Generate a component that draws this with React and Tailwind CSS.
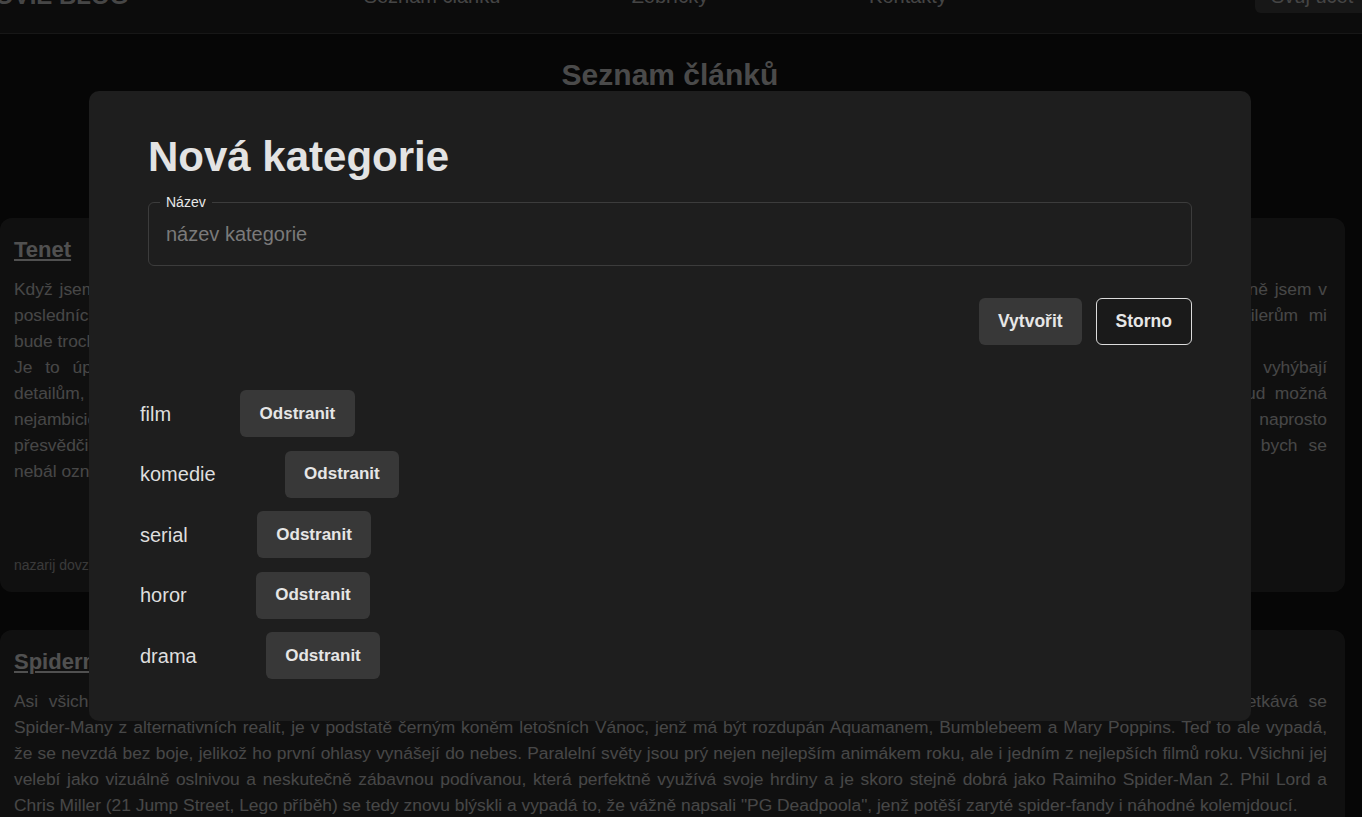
const tenet = [
  [
    'Když jsem poprvé viděl trailer na nový film Christophera Nolana, věděl jsem, že tohle bude něco výjimečného, a na premiéru jsem se těšil celé léto. Upřímně jsem v',
    'posledních letech v kině nezažil tak silný zážitek jako u Teneta, a proto se vám ho pokusím co nejlépe přiblížit, i když vzhledem k možným spoilerům mi',
    'bude trochu těžké popsat samotný děj.',
  ],
  [
    'Je to úplně jiný typ filmu, než na jaký jsme zvyklí. Nolan si opět pohrává s časem, vytváří svět plný paradoxů a postavy se řečem spíše vyhýbají',
    'detailům, takže film je neuvěřitelně rychlý a divák nemá ani chvilku na oddech. Tenet je podle mě jedním z nejlepších snímků posledních let, a pokud možná',
    'nejambicióznějším filmem, jaký kdy Christopher Nolan natočil. Vše do sebe perfektně zapadá, herci jsou skvělí a hudba Ludwiga Göranssona mě naprosto',
    'přesvědčila, že jde o výjimečný zážitek. Vizuální efekty jsou dechberoucí a akční scény patří k tomu nejlepšímu, co jsem viděl. Je to film, který bych se',
    'nebál označit za moderní klasiku.',
  ],
];

const spider = [
  [
    'Asi všichni čekali, že nový animovaný film o Spider-Manovi, ve kterém se mladý Miles Morales z Brooklynu po smrti Petera Parkera nečekaně setkává se',
    'Spider-Many z alternativních realit, je v podstatě černým koněm letošních Vánoc, jenž má být rozdupán Aquamanem, Bumblebeem a Mary Poppins. Teď to ale vypadá,',
    'že se nevzdá bez boje, jelikož ho první ohlasy vynášejí do nebes. Paralelní světy jsou prý nejen nejlepším animákem roku, ale i jedním z nejlepších filmů roku. Všichni jej',
    'velebí jako vizuálně oslnivou a neskutečně zábavnou podívanou, která perfektně využívá svoje hrdiny a je skoro stejně dobrá jako Raimiho Spider-Man 2. Phil Lord a',
    'Chris Miller (21 Jump Street, Lego příběh) se tedy znovu blýskli a vypadá to, že vážně napsali "PG Deadpoola", jenž potěší zaryté spider-fandy i náhodné kolemjdoucí.',
  ],
];

const categories = ['film', 'komedie', 'serial', 'horor', 'drama'];

// Article card in the list behind the modal
const Article = ({ title, paragraphs, footer }) => (
  <article className="rounded-xl bg-[#2a2a2a] pl-[14px] pr-[18px] pt-[19px] pb-[17px]">
    <h2 className="text-[22px] leading-[26px] font-bold underline text-[#c8c8c8]">{title}</h2>
    <div className="mt-[13px] text-[17.4px] leading-[26px] text-[#b2b2b2]">
      {paragraphs.map((lines, i) => (
        <p key={i}>
          {lines.map((line, j) => (
            <span
              key={j}
              className={
                j < lines.length - 1
                  ? 'block whitespace-nowrap text-justify [text-align-last:justify]'
                  : 'block whitespace-nowrap'
              }
            >
              {line}
            </span>
          ))}
        </p>
      ))}
    </div>
    {footer && <p className="mt-[71px] text-sm leading-5 text-[#919191]">{footer}</p>}
  </article>
);

export default function App() {
  return (
    <div className="min-h-screen overflow-hidden bg-[#0f0f0f] font-['Liberation_Sans',Arial,sans-serif]">
      {/* Header (scrolled slightly) */}
      <header className="h-[34px] overflow-hidden border-b border-[#3a3a3a] bg-[#1e1e1e]">
        <div className="-mt-[16px] flex h-[24px] items-center">
          <div className="-ml-[25px] w-[338px] shrink-0 text-2xl leading-6 font-bold text-[#b0b0b0]">MOVIE BLOG</div>
          <nav className="flex text-[20px] leading-6 text-[#adadad]">
            <a className="w-[238px] text-center">Seznam článků</a>
            <a className="w-[238px] text-center">Žebříčky</a>
            <a className="w-[238px] text-center">Kontakty</a>
          </nav>
          <button className="ml-[228px] flex h-[34px] w-[140px] shrink-0 items-end rounded-md bg-[#3a3a3a] px-[16px] pb-[5px] text-[20px] leading-6 text-[#adadad]">
            Svůj účet
          </button>
        </div>
      </header>

      <main className="w-[1345px]">
        <h1 className="mt-[23px] pr-[5px] text-center text-[30px] leading-9 font-bold text-[#b9b9b9]">Seznam článků</h1>
        <div className="mt-[125px] flex flex-col gap-[38px]">
          <Article title="Tenet" paragraphs={tenet} footer="nazarij dovzhenko · 12. 9. 2020" />
          <Article title="Spiderman: Paralelní světy" paragraphs={spider} />
        </div>
      </main>

      {/* Modal */}
      <div className="fixed inset-0 bg-black/60 pt-[91px] pl-[89px]">
        <div className="w-[1162px] rounded-[10px] bg-[#1e1e1e] px-[59px] pt-[42px] pb-[42px]">
          <h2 className="text-[42px] leading-[48px] font-bold text-[#e3e3e3]">Nová kategorie</h2>

          <fieldset className="mt-[13px] rounded-md border border-[#3c3c3c] px-[11px] pb-[7px]">
            <legend className="px-[6px] text-sm leading-4 text-[#e8e8e8]">Název</legend>
            <input
              type="text"
              placeholder="název kategorie"
              className="h-[48px] w-full bg-transparent px-[6px] text-[20px] text-[#e0e0e0] outline-none placeholder:text-[#7a7a7a]"
            />
          </fieldset>

          <div className="mt-[32px] flex justify-end gap-[14px]">
            <button className="h-[47px] rounded-md bg-[#383838] px-[19px] text-[17.5px] font-bold text-[#e6e6e6]">
              Vytvořit
            </button>
            <button className="h-[47px] rounded-md border border-[#dcdcdc] bg-[#1a1a1a] px-[19px] text-[17.5px] font-bold text-[#e6e6e6]">
              Storno
            </button>
          </div>

          <ul className="mt-[45px] -ml-[8px] flex flex-col gap-[13.5px]">
            {categories.map(name => (
              <li key={name} className="flex items-center">
                <span className="text-[20px] text-[#dedede]">{name}</span>
                <button className="ml-[69px] h-[47px] rounded-md bg-[#383838] px-[19.5px] text-[17px] font-bold text-[#e6e6e6]">
                  Odstranit
                </button>
              </li>
            ))}
          </ul>
        </div>
      </div>
    </div>
  );
}
